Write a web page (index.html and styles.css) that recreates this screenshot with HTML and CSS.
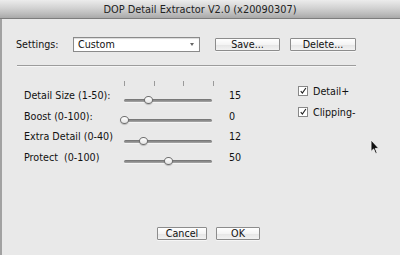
FILE: index.html
```html
<!DOCTYPE html>
<html lang="en">
<head>
    <meta charset="UTF-8">
    <meta name="viewport" content="width=device-width, initial-scale=1.0">
    <title>DOP Detail Extractor</title>
    <link rel="stylesheet" href="styles.css">
</head>

<body>
    <div class="window">
        <div class="titlebar">DOP Detail Extractor V2.0 (x20090307)</div>

        <div class="content">
            <div class="settings-row">
                <span class="settings-label">Settings:</span>
                <div class="select">
                    <span>Custom</span>
                    <span class="select-arrow"></span>
                </div>
                <button class="btn btn-save">Save...</button>
                <button class="btn btn-delete">Delete...</button>
            </div>

            <div class="separator"></div>

            <div class="main">
                <div class="sliders">
                    <div class="ticks">
                        <span></span><span></span><span></span><span></span>
                    </div>

                    <div class="slider-row">
                        <span class="slider-label">Detail Size (1-50):</span>
                        <div class="track"><span class="thumb" style="left: 28.4%"></span></div>
                        <span class="slider-value">15</span>
                    </div>
                    <div class="slider-row">
                        <span class="slider-label">Boost (0-100):</span>
                        <div class="track"><span class="thumb" style="left: 0%"></span></div>
                        <span class="slider-value">0</span>
                    </div>
                    <div class="slider-row">
                        <span class="slider-label">Extra Detail (0-40)</span>
                        <div class="track"><span class="thumb" style="left: 22.7%"></span></div>
                        <span class="slider-value">12</span>
                    </div>
                    <div class="slider-row">
                        <span class="slider-label">Protect&nbsp; (0-100)</span>
                        <div class="track"><span class="thumb" style="left: 50%"></span></div>
                        <span class="slider-value">50</span>
                    </div>
                </div>

                <div class="checks">
                    <label class="check">
                        <span class="box">
                            <svg width="10" height="10" viewBox="0 0 10 10"><path d="M2.2 5.2 L4.2 7.6 L8.6 1.2" fill="none" stroke="#222" stroke-width="1.4"/></svg>
                        </span>
                        Detail+
                    </label>
                    <label class="check">
                        <span class="box">
                            <svg width="10" height="10" viewBox="0 0 10 10"><path d="M2.2 5.2 L4.2 7.6 L8.6 1.2" fill="none" stroke="#222" stroke-width="1.4"/></svg>
                        </span>
                        Clipping-
                    </label>
                </div>
            </div>

            <div class="footer">
                <button class="btn btn-cancel">Cancel</button>
                <button class="btn btn-ok">OK</button>
            </div>
        </div>

        <svg class="cursor" width="10" height="16" viewBox="0 0 10 16">
            <path d="M1 1 L1 12.5 L3.6 10 L5.6 14.6 L7.2 13.9 L5.3 9.4 L8.8 9.4 Z" fill="#111" stroke="#f4f4f4" stroke-width="0.9" stroke-linejoin="round"/>
        </svg>
    </div>
</body>

</html>
```

FILE: styles.css
```css
body {
    margin: 0;
    font-family: 'DejaVu Sans', Verdana, sans-serif;
    font-size: 9.6px;
    color: #111;
    background: #e9e9e9;
}

.window {
    position: relative;
    width: 400px;
    height: 255px;
    overflow: hidden;
    background: #e9e9e9;
}

.titlebar {
    height: 18px;
    line-height: 19px;
    text-align: center;
    font-size: 9.8px;
    color: #222;
    background: linear-gradient(#ececec 0%, #d2d2d2 45%, #bdbdbd 75%, #a9a9a9 100%);
    border-bottom: 1px solid #7d7d7d;
}

.content {
    display: flex;
    flex-direction: column;
    height: 236px;
    box-sizing: border-box;
    padding: 18px 0 0 14px;
    border-left: 2px solid #a2a2a2;
}

.settings-row {
    display: flex;
    align-items: center;
    height: 15px;
}

.settings-label {
    width: 57px;
}

.select {
    display: flex;
    align-items: center;
    justify-content: space-between;
    width: 127px;
    height: 15px;
    box-sizing: border-box;
    padding: 0 5px 0 4px;
    background: #fff;
    border: 1px solid #8a8a8a;
    box-shadow: inset 0 1px 1px rgba(0, 0, 0, 0.15);
}

.select-arrow {
    width: 0;
    height: 0;
    border-left: 2.5px solid transparent;
    border-right: 2.5px solid transparent;
    border-top: 3px solid #666;
}

.btn {
    height: 13px;
    padding: 0;
    box-sizing: border-box;
    font-family: inherit;
    font-size: 9.6px;
    line-height: 11px;
    color: #111;
    background: linear-gradient(#ffffff 0%, #f4f4f4 50%, #e6e6e6 55%, #f2f2f2 100%);
    border: 1px solid #8c8c8c;
    border-radius: 1px;
    box-shadow: 0 1px 0 rgba(255, 255, 255, 0.6);
}

.btn-save {
    width: 65px;
    margin-left: 15px;
}

.btn-delete {
    width: 66px;
    margin-left: 10px;
}

.separator {
    width: 339px;
    height: 1px;
    margin: 13px 0 0 1px;
    background: #9c9c9c;
    box-shadow: 0 1px 0 #f6f6f6;
}

.main {
    display: flex;
    margin-top: 15px;
}

.sliders {
    padding-left: 8px;
}

.ticks {
    display: flex;
    height: 5px;
    margin-left: 100px;
    margin-bottom: 2px;
}

.ticks span {
    width: 1px;
    height: 5px;
    margin-right: 28.5px;
    background: #9a9a9a;
}

.slider-row {
    display: grid;
    grid-template-columns: 100px 88px 40px;
    height: 20.5px;
    line-height: 16px;
}

.track {
    position: relative;
    height: 3px;
    margin-top: 10.5px;
    border-radius: 2px;
    background: linear-gradient(#6f6f6f, #a8a8a8);
    box-shadow: 0 1px 0 #f4f4f4;
}

.thumb {
    position: absolute;
    top: -3px;
    width: 9px;
    height: 8px;
    margin-left: -4.5px;
    box-sizing: border-box;
    border-radius: 50%;
    background: linear-gradient(#ffffff, #e4e4e4);
    border: 1px solid #6e6e6e;
    box-shadow: 0 1px 1px rgba(0, 0, 0, 0.2);
}

.slider-value {
    padding-left: 17px;
}

.checks {
    display: flex;
    flex-direction: column;
    margin-left: 46px;
    padding-top: 5px;
}

.check {
    display: flex;
    align-items: flex-start;
    gap: 5px;
    height: 21px;
    line-height: 11px;
}

.box {
    display: flex;
    align-items: center;
    justify-content: center;
    width: 10px;
    height: 10px;
    box-sizing: border-box;
    background: #fff;
    border: 1px solid #888;
}

.box svg {
    margin-top: -1px;
}

.footer {
    display: flex;
    gap: 9px;
    margin-top: auto;
    padding: 0 0 15px 141px;
}

.btn-cancel {
    width: 50px;
}

.btn-ok {
    width: 44px;
}

.cursor {
    position: absolute;
    left: 370px;
    top: 139px;
    filter: blur(0.3px);
}
```
